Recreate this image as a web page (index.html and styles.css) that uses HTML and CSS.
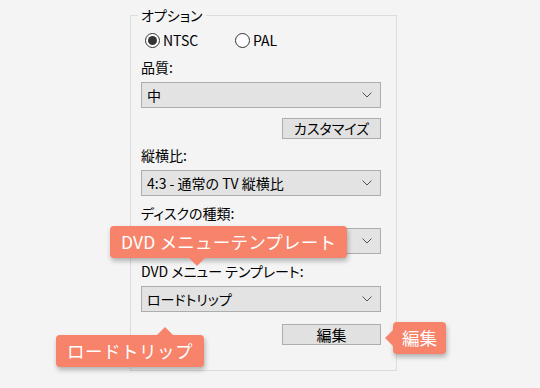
FILE: index.html
```html
<!DOCTYPE html>
<html lang="ja">
<head>
    <meta charset="UTF-8">
    <meta name="viewport" content="width=device-width, initial-scale=1.0">
    <title>オプション</title>
    <link rel="stylesheet" href="styles.css">
</head>
<body>

    <div class="page">
        <fieldset class="options">
            <legend>オプション</legend>

            <div class="radio-row">
                <label class="radio"><span class="dot checked"></span>NTSC</label>
                <label class="radio"><span class="dot"></span>PAL</label>
            </div>

            <div class="field-label first">品質:</div>
            <div class="combo">
                <span>中</span>
                <svg class="chev" width="10" height="6" viewBox="0 0 10 6"><polyline points="0.5,0.5 5,5 9.5,0.5" fill="none" stroke="#555" stroke-width="1"/></svg>
            </div>
            <div class="btn-row"><div class="btn wide">カスタマイズ</div></div>

            <div class="field-label">縦横比:</div>
            <div class="combo">
                <span>4:3 - 通常の TV 縦横比</span>
                <svg class="chev" width="10" height="6" viewBox="0 0 10 6"><polyline points="0.5,0.5 5,5 9.5,0.5" fill="none" stroke="#555" stroke-width="1"/></svg>
            </div>

            <div class="field-label">ディスクの種類:</div>
            <div class="combo">
                <span></span>
                <svg class="chev" width="10" height="6" viewBox="0 0 10 6"><polyline points="0.5,0.5 5,5 9.5,0.5" fill="none" stroke="#555" stroke-width="1"/></svg>
            </div>

            <div class="field-label gap">DVD メニュー テンプレート:</div>
            <div class="combo">
                <span>ロードトリップ</span>
                <svg class="chev" width="10" height="6" viewBox="0 0 10 6"><polyline points="0.5,0.5 5,5 9.5,0.5" fill="none" stroke="#555" stroke-width="1"/></svg>
            </div>
            <div class="btn-row last"><div class="btn wide big">編集</div></div>
        </fieldset>

        <!-- 吹き出し -->
        <div class="tip tip-down tip-menu">DVD メニューテンプレート</div>
        <div class="tip tip-up tip-trip">ロードトリップ</div>
        <div class="tip tip-left tip-edit">編集</div>
    </div>

</body>
</html>
```

FILE: styles.css
```css
/* リセット */
* {
    margin: 0;
    padding: 0;
    box-sizing: border-box;
}

body {
    font-family: "Noto Sans CJK JP", "Noto Sans", sans-serif;
    font-size: 14px;
    color: #000;
    background-color: #f4f4f4;
    width: 540px;
    height: 388px;
    overflow: hidden;
}

.page {
    position: relative;
    padding: 7px 0 0 130px;
}

/* グループボックス */
.options {
    width: 267px;
    height: 364px;
    border: 1px solid #dcdcdc;
    padding: 0 15px 0 10px;
}

.options legend {
    font-size: 14px;
    line-height: 16px;
    padding: 0 3px;
    margin-left: -3px;
    font-feature-settings: "palt";
}

.radio-row {
    display: flex;
    margin-top: 9px;
    padding-left: 4px;
    height: 16px;
    align-items: center;
}

.radio {
    display: flex;
    align-items: center;
    gap: 3px;
    width: 90px;
    line-height: 16px;
    font-feature-settings: "palt";
}

.dot {
    width: 15px;
    height: 15px;
    border: 1px solid #333;
    border-radius: 50%;
    background: #fff;
    display: flex;
    align-items: center;
    justify-content: center;
}

.dot.checked::after {
    content: "";
    width: 9px;
    height: 9px;
    border-radius: 50%;
    background: #333;
}

.field-label {
    line-height: 16px;
    margin-top: 8px;
    font-feature-settings: "palt";
}

.field-label.first {
    margin-top: 11px;
}

.field-label.gap {
    margin-top: 12px;
}

.combo {
    margin-top: 7px;
    height: 26px;
    border: 1px solid #adadad;
    background-color: #e3e3e3;
    display: flex;
    align-items: center;
    justify-content: space-between;
    padding: 0 8px 0 5px;
    font-feature-settings: "palt";
}

.combo + .field-label {
    margin-top: 9px;
}

.btn-row {
    display: flex;
    justify-content: flex-end;
    margin-top: 10px;
}

.btn-row.last {
    margin-top: 12px;
}

.btn {
    height: 21px;
    border: 1px solid #adadad;
    background-color: #e1e1e1;
    text-align: center;
    line-height: 19px;
    font-feature-settings: "palt";
}

.btn.wide {
    width: 99px;
}

.btn.big {
    font-size: 15px;
}

/* 吹き出し */
.tip {
    position: absolute;
    height: 32px;
    line-height: 32px;
    padding: 0 11px;
    background-color: #f6836a;
    color: #fff;
    font-size: 17.5px;
    border-radius: 4px;
    box-shadow: 1px 3px 5px rgba(0, 0, 0, 0.28);
    white-space: nowrap;
}

.tip::after {
    content: "";
    position: absolute;
    border: 8px solid transparent;
}

.tip-down::after {
    top: 100%;
    border-top-color: #f6836a;
}

.tip-up::after {
    bottom: 100%;
    border-bottom-color: #f6836a;
}

.tip-left::after {
    right: 100%;
    top: 8px;
    border-right-color: #f6836a;
}

.tip-menu {
    left: 110px;
    top: 226px;
    letter-spacing: 0.2px;
}

.tip-menu::after {
    left: 79px;
}

.tip-trip {
    left: 56px;
    top: 335px;
    letter-spacing: 0.5px;
}

.tip-trip::after {
    left: 101px;
}

.tip-edit {
    left: 393px;
    top: 322px;
    padding: 0 9px;
}
```
